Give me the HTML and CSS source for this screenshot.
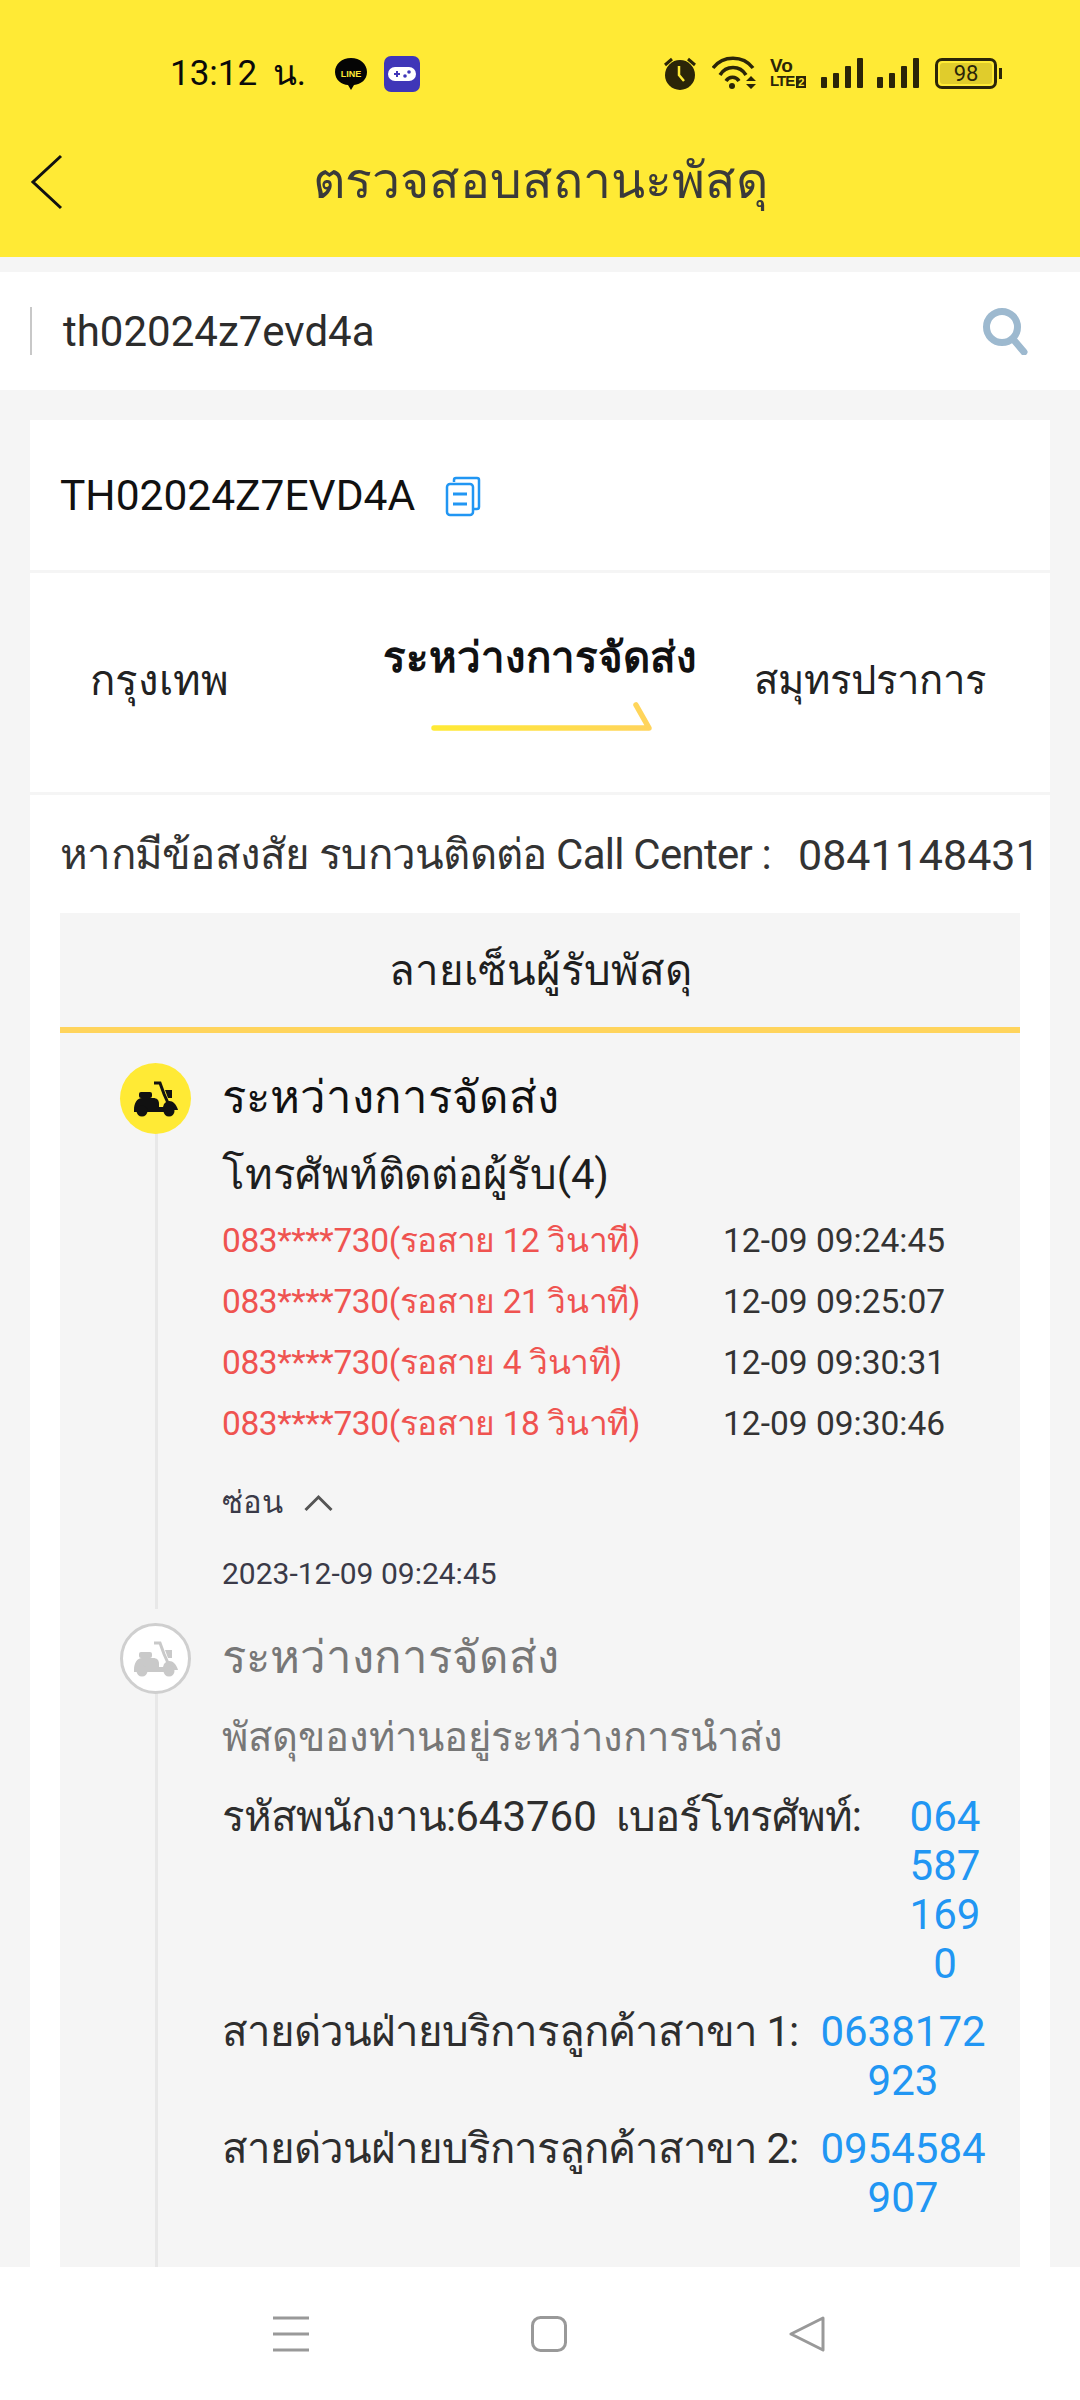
FILE: index.html
```html
<!DOCTYPE html>
<html lang="th">
  <head>
    <meta charset="UTF-8" />
    <meta name="viewport" content="width=device-width, initial-scale=1.0" />
    <title>ตรวจสอบสถานะพัสดุ</title>
    <link rel="stylesheet" href="styles.css">
  </head>
  <body>
    <header class="top">
      <div class="status">
        <span class="time">13:12 น.</span>
        <svg class="ic-line" viewBox="0 0 34 34"><path d="M17 1C8 1 1 7 1 15s7 13 13 13l3 5 3-5c7-1 13-5 13-13S26 1 17 1z" fill="#050505"/><text x="17" y="19.500" class="line-txt" text-anchor="middle">LINE</text></svg>
        <svg class="ic-game" viewBox="0 0 36 36"><rect width="36" height="36" rx="7" fill="#3f36b8"/><rect x="4" y="11" width="28" height="14" rx="7" fill="#fff"/><path d="M10 18h6M13 15v6" stroke="#3f36b8" stroke-width="2"/><circle cx="21" cy="20" r="1.800" fill="#3f36b8"/><circle cx="25" cy="16" r="1.800" fill="#3f36b8"/></svg>
        <div class="status-right">
          <svg class="ic-alarm" viewBox="0 0 32 34"><circle cx="16" cy="19" r="15" fill="#2b2508"/><path d="M15 10v9l5 6" stroke="#ffea35" stroke-width="2.500" fill="none"/><path d="M1 9l7-6M31 9l-7-6" stroke="#2b2508" stroke-width="3"/></svg>
          <svg class="ic-wifi" viewBox="0 0 44 34"><g fill="none" stroke="#2b2508" stroke-width="3.500"><path d="M1 12C11 -1 31 -1 41 12"/><path d="M8 19C14 9 28 9 34 19"/><path d="M14 25C17 20 24 20 27 25"/></g><circle cx="20" cy="30" r="3" fill="#2b2508"/><path d="M34 25h10l-5-5zM34 28h10l-5 5z" fill="#2b2508"/></svg>
          <div class="volte"><span class="vo">Vo</span><span class="lte">LTE<b>2</b></span></div>
          <div class="bars"><i class="b1"></i><i class="b2"></i><i class="b3"></i><i class="b4"></i></div>
          <div class="bars"><i class="b1"></i><i class="b2"></i><i class="b3"></i><i class="b4"></i></div>
          <div class="battery"><div class="batt-fill">98</div></div>
        </div>
      </div>
      <div class="title-bar">
        <svg class="ic-back" viewBox="0 0 34 56"><path d="M32 2L4 28l28 26" fill="none" stroke="#111" stroke-width="3"/></svg>
        <h1>ตรวจสอบสถานะพัสดุ</h1>
      </div>
    </header>

    <div class="search">
      <div class="search-in">th02024z7evd4a</div>
      <svg class="ic-search" viewBox="0 0 48 48"><circle cx="20" cy="20" r="15.500" fill="none" stroke="#9db9cf" stroke-width="7"/><path d="M31 32l11 13" stroke="#9db9cf" stroke-width="7" stroke-linecap="round"/></svg>
    </div>

    <main class="card">
      <div class="track-no">
        <span>TH02024Z7EVD4A</span>
        <svg class="ic-copy" viewBox="0 0 36 41"><path d="M9 6V4a2 2 0 012-2h21a2 2 0 012 2v27a2 2 0 01-2 2h-4" fill="none" stroke="#2196f3" stroke-width="2.500"/><rect x="2" y="8" width="26" height="31" rx="3" fill="#fff" stroke="#2196f3" stroke-width="2.500"/><path d="M8 18h14M8 28h14" stroke="#2196f3" stroke-width="3"/></svg>
      </div>
      <div class="route">
        <div class="city">กรุงเทพ</div>
        <div class="route-mid">
          <div class="route-status">ระหว่างการจัดส่ง</div>
          <svg class="arrow" viewBox="0 0 222 30"><defs><linearGradient id="ag"><stop offset="0" stop-color="#ffea35"/><stop offset="1" stop-color="#ffd45c"/></linearGradient></defs><path d="M3 26h215L205 3" fill="none" stroke="url(#ag)" stroke-width="5.500" stroke-linecap="round" stroke-linejoin="round"/></svg>
        </div>
        <div class="city city-to">สมุทรปราการ</div>
      </div>
      <div class="call">
        <span class="call-txt">หากมีข้อสงสัย รบกวนติดต่อ Call Center :</span>
        <span class="call-no">0841148431</span>
      </div>

      <section class="panel">
        <div class="panel-head">ลายเซ็นผู้รับพัสดุ</div>
        <div class="timeline">
          <div class="step">
            <div class="dot dot-on">
              <svg viewBox="0 0 44 36"><rect x="5" y="11" width="13" height="6" rx="2" fill="currentColor"/><path d="M0 29c0-7 3-12 8-12h11c4 0 6 2 6 6v3h6v5H0z" fill="currentColor"/><path d="M20 2h6l4 11 4 9" fill="none" stroke="currentColor" stroke-width="3"/><path d="M31 9h7v8h-4z" fill="currentColor"/><path d="M30 23c4-5 11-4 14 6H28z" fill="currentColor"/><circle cx="8" cy="30" r="5.500" fill="currentColor"/><circle cx="35" cy="30" r="5.500" fill="currentColor"/></svg>
            </div>
            <div class="step-body">
              <div class="step-title">ระหว่างการจัดส่ง</div>
              <div class="step-sub">โทรศัพท์ติดต่อผู้รับ(4)</div>
              <ul class="calls">
                <li><span>083****730(รอสาย 12 วินาที)</span><time>12-09 09:24:45</time></li>
                <li><span>083****730(รอสาย 21 วินาที)</span><time>12-09 09:25:07</time></li>
                <li><span>083****730(รอสาย 4 วินาที)</span><time>12-09 09:30:31</time></li>
                <li><span>083****730(รอสาย 18 วินาที)</span><time>12-09 09:30:46</time></li>
              </ul>
              <div class="hide-row">ซ่อน
                <svg viewBox="0 0 30 18"><path d="M2 16L15 3l13 13" fill="none" stroke="#555" stroke-width="3"/></svg>
              </div>
              <div class="stamp">2023-12-09 09:24:45</div>
            </div>
          </div>
          <div class="step step-old">
            <div class="dot dot-off">
              <svg viewBox="0 0 44 36"><rect x="5" y="11" width="13" height="6" rx="2" fill="currentColor"/><path d="M0 29c0-7 3-12 8-12h11c4 0 6 2 6 6v3h6v5H0z" fill="currentColor"/><path d="M20 2h6l4 11 4 9" fill="none" stroke="currentColor" stroke-width="3"/><path d="M31 9h7v8h-4z" fill="currentColor"/><path d="M30 23c4-5 11-4 14 6H28z" fill="currentColor"/><circle cx="8" cy="30" r="5.500" fill="currentColor"/><circle cx="35" cy="30" r="5.500" fill="currentColor"/></svg>
            </div>
            <div class="step-body">
              <div class="step-title">ระหว่างการจัดส่ง</div>
              <div class="step-sub">พัสดุของท่านอยู่ระหว่างการนำส่ง</div>
              <div class="contact">
                <div class="contact-lb">รหัสพนักงาน:<span class="digits">643760</span>&nbsp; เบอร์โทรศัพท์:</div>
                <div class="contact-no no-a">0645871690</div>
              </div>
              <div class="contact">
                <div class="contact-lb">สายด่วนฝ่ายบริการลูกค้าสาขา 1:</div>
                <div class="contact-no no-b">0638172923</div>
              </div>
              <div class="contact">
                <div class="contact-lb">สายด่วนฝ่ายบริการลูกค้าสาขา 2:</div>
                <div class="contact-no no-b">0954584907</div>
              </div>
            </div>
          </div>
        </div>
      </section>
    </main>

    <nav class="navbar">
      <svg viewBox="0 0 36 36"><path d="M0 2h36M0 18h36M0 34h36" stroke="#999" stroke-width="3"/></svg>
      <svg viewBox="0 0 36 36"><rect x="1.500" y="1.500" width="33" height="33" rx="8" fill="none" stroke="#999" stroke-width="3"/></svg>
      <svg viewBox="0 0 36 36"><path d="M34 2L2 18l32 16z" fill="none" stroke="#999" stroke-width="3" stroke-linejoin="round"/></svg>
    </nav>
  </body>
</html>
```

FILE: styles.css
```css
* {
  margin: 0;
  padding: 0;
  box-sizing: border-box;
}
html,
body {
  height: 2400px;
  overflow: hidden;
}
body {
  width: 1080px;
  display: flex;
  flex-direction: column;
  background: #f5f5f5;
  font-family: Roboto, "Noto Sans", "Liberation Sans", sans-serif;
  color: #1e1e1e;
}
.top {
  height: 257px;
  background: #ffea35;
  flex: none;
}
.status {
  height: 146px;
  padding: 51px 0 0 170px;
  display: flex;
  align-items: flex-start;
}
.time {
  font-size: 35px;
  line-height: 46px;
  color: #0a0a0a;
  width: 164px;
  word-spacing: 7px;
  white-space: nowrap;
}
.ic-line {
  width: 34px;
  height: 34px;
  margin-top: 6px;
}
.line-txt {
  font-size: 9px;
  font-weight: 700;
  fill: #ffea35;
  font-family: "Liberation Sans", sans-serif;
}
.ic-game {
  width: 36px;
  height: 36px;
  margin: 5px 0 0 16px;
}
.status-right {
  display: flex;
  margin-left: 244px;
  align-items: center;
  height: 44px;
}
.ic-alarm {
  width: 32px;
  height: 34px;
}
.ic-wifi {
  width: 44px;
  height: 34px;
  margin-left: 16px;
}
.volte {
  margin-left: 14px;
  width: 36px;
  color: #2b2508;
  display: flex;
  flex-direction: column;
  font-weight: 700;
  font-family: "Liberation Sans", sans-serif;
}
.vo {
  font-size: 19px;
  line-height: 16px;
}
.lte {
  font-size: 15px;
  line-height: 14px;
  letter-spacing: -1px;
  white-space: nowrap;
}
.volte b {
  background: #2b2508;
  color: #ffea35;
  font-size: 11px;
  margin-left: 2px;
  padding: 0 2px;
  letter-spacing: 0;
}
.bars {
  display: flex;
  align-items: flex-end;
  gap: 6px;
  height: 30px;
  margin-left: 15px;
}
.bars + .bars {
  margin-left: 14px;
}
.bars i {
  width: 6px;
  background: #2b2508;
  display: block;
  border-radius: 1px;
}
.b1 { height: 11px; }
.b2 { height: 15px; }
.b3 { height: 22px; }
.b4 { height: 30px; }
.battery {
  width: 62px;
  height: 31px;
  border: 3px solid #2b2508;
  border-radius: 7px;
  padding: 2px;
  margin-left: 16px;
  position: relative;
}
.battery::after {
  content: "";
  position: absolute;
  right: -8px;
  top: 7px;
  width: 3px;
  height: 11px;
  background: #2b2508;
}
.batt-fill {
  height: 100%;
  background: #e0cc2c;
  border-radius: 3px;
  font-size: 22px;
  line-height: 21px;
  text-align: center;
  color: #2b2508;
}
.title-bar {
  position: relative;
  height: 111px;
  display: flex;
  justify-content: center;
}
.ic-back {
  position: absolute;
  left: 29px;
  top: 8px;
  width: 34px;
  height: 56px;
}
.title-bar h1 {
  font-size: 50px;
  font-weight: 400;
  line-height: 62px;
  color: #3a3a3a;
  margin-top: 4px;
}
.search {
  margin-top: 15px;
  height: 118px;
  flex: none;
  background: #fff;
  display: flex;
  align-items: center;
  justify-content: space-between;
  padding: 0 50px 0 30px;
}
.search-in {
  border-left: 2px solid #c8c8c8;
  padding-left: 31px;
  height: 48px;
  font-size: 42px;
  line-height: 50px;
  color: #2c2c2c;
}
.ic-search {
  width: 48px;
  height: 48px;
}
.card {
  margin: 30px 30px 0;
  width: 1020px;
  flex: 1;
  min-height: 0;
  background: #fff;
  display: flex;
  flex-direction: column;
}
.track-no {
  height: 150px;
  flex: none;
  display: flex;
  align-items: center;
  padding-left: 30px;
  font-size: 42.500px;
  color: #111;
}
.ic-copy {
  width: 36px;
  height: 41px;
  margin: 2px 0 0 30px;
}
.route {
  border-top: 3px solid #f5f5f5;
  height: 222px;
  flex: none;
  display: flex;
  padding: 0 0 0 30px;
}
.city {
  font-size: 42px;
  line-height: 54px;
  margin-top: 81px;
  width: 300px;
  padding-left: 30px;
  color: #222;
  flex: none;
}
.route-mid {
  width: 310px;
  flex: none;
  margin-left: 23px;
  padding-top: 58px;
  text-align: center;
}
.route-status {
  font-size: 42px;
  font-weight: 700;
  line-height: 54px;
  white-space: nowrap;
  color: #111;
}
.arrow {
  display: block;
  width: 222px;
  height: 30px;
  margin: 17px 0 0 48px;
}
.city-to {
  width: auto;
  padding-left: 61px;
  white-space: nowrap;
  font-size: 40px;
}
.call {
  border-top: 3px solid #f5f5f5;
  height: 121px;
  flex: none;
  padding: 35px 0 0 30px;
  display: flex;
  gap: 27px;
  font-size: 42px;
  line-height: 50px;
  white-space: nowrap;
  color: #333;
}
.call-txt {
  letter-spacing: -0.750px;
}
.call-no {
  font-size: 43px;
}
.panel {
  margin: 0 30px;
  width: 960px;
  flex: 1;
  min-height: 0;
  background: #f5f5f5;
  display: flex;
  flex-direction: column;
}
.panel-head {
  height: 120px;
  flex: none;
  border-bottom: 6px solid #ffd45c;
  text-align: center;
  font-size: 42px;
  line-height: 116px;
  color: #1e1e1e;
}
.timeline {
  padding: 30px 30px 0 60px;
  flex: 1;
  min-height: 0;
  display: flex;
  flex-direction: column;
}
.step {
  display: flex;
  position: relative;
}
.step::before {
  content: "";
  position: absolute;
  left: 35px;
  top: 70px;
  bottom: -15px;
  width: 3px;
  background: #e8e8e8;
}
.step-old {
  margin-top: 29px;
  flex: 1;
  min-height: 0;
}
.step-old::before {
  bottom: 0;
}
.dot {
  width: 71px;
  height: 71px;
  border-radius: 50%;
  flex: none;
  display: flex;
  align-items: center;
  justify-content: center;
  position: relative;
  z-index: 1;
}
.dot svg {
  width: 44px;
  height: 36px;
}
.dot-on {
  background: #ffea35;
  color: #111;
}
.dot-off {
  background: #fff;
  border: 3px solid #cfcfcf;
  color: #c9c9c9;
}
.step-body {
  margin-left: 31px;
  width: 768px;
}
.step-title {
  font-size: 45.500px;
  line-height: 60px;
  color: #111;
  margin-top: 5px;
}
.step-sub {
  font-size: 42px;
  line-height: 54px;
  margin-top: 20px;
  color: #1e1e1e;
  letter-spacing: -0.250px;
}
.calls {
  list-style: none;
  margin-top: 8px;
}
.calls li {
  display: flex;
  height: 61px;
  align-items: center;
  font-size: 33.500px;
}
.calls span {
  width: 501px;
  color: #ef5350;
  letter-spacing: -0.400px;
}
.calls time {
  color: #333;
}
.hide-row {
  display: flex;
  align-items: center;
  gap: 20px;
  font-size: 31px;
  color: #3a3a48;
  line-height: 42px;
  margin-top: 28px;
}
.hide-row svg {
  width: 31px;
  height: 18px;
}
.stamp {
  font-size: 30px;
  line-height: 40px;
  color: #3a3a48;
  margin-top: 30px;
}
.step-old .step-title {
  color: #777;
}
.step-old .step-sub {
  color: #777;
  font-size: 40px;
  letter-spacing: 0;
  margin-top: 23px;
}
.contact {
  display: flex;
  font-size: 42px;
  line-height: 49px;
  color: #2e2e2e;
  margin-top: 19px;
  white-space: nowrap;
}
.step-sub + .contact {
  margin-top: 27px;
}
.contact-lb {
  letter-spacing: -1px;
}
.digits {
  letter-spacing: 0;
}
.contact-no {
  color: #2196f3;
  text-align: center;
  white-space: normal;
  word-break: break-all;
  margin-left: auto;
  letter-spacing: 0;
}
.no-a {
  width: 80px;
  margin-right: 5px;
}
.no-b {
  width: 170px;
  margin-right: 2px;
}
.navbar {
  height: 133px;
  flex: none;
  background: #fff;
  display: flex;
  gap: 222px;
  padding: 49px 0 0 273px;
}
.navbar svg {
  width: 36px;
  height: 36px;
}
```
